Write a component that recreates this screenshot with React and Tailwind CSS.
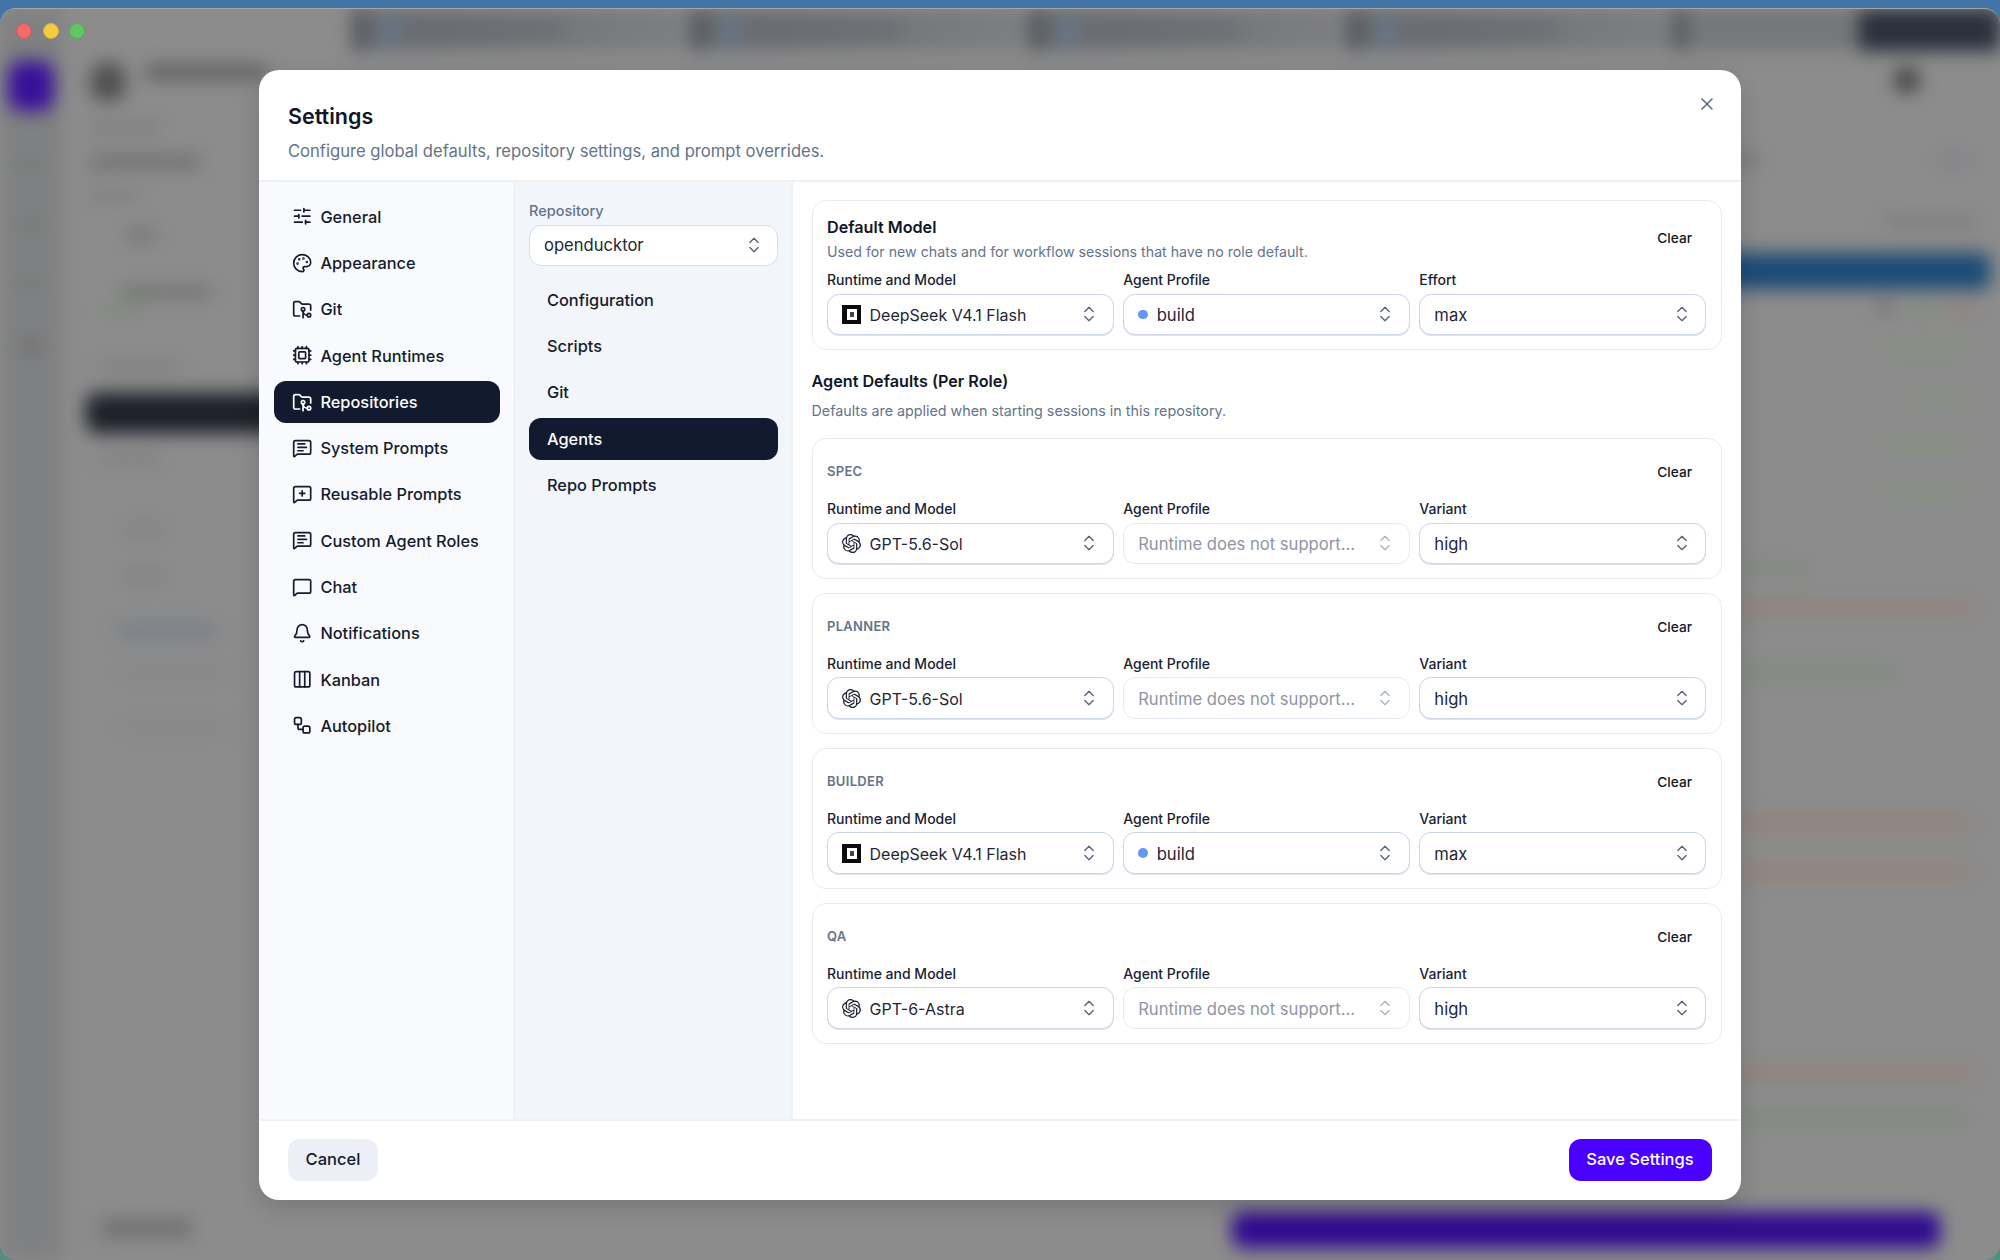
import React from "react";
import { SlidersHorizontal, Palette, FolderGit2, Cpu, MessageSquareText, MessageSquarePlus, MessageSquare, Bell, Columns3, Workflow, ChevronsUpDown, X } from "lucide-react";

const FONT = "font-['Inter','Liberation_Sans',sans-serif]";

function OpenAIIcon() {
  return (
    <svg viewBox="0 0 24 24" className="h-[19px] w-[19px] shrink-0" fill="#1a2030">
      <path d="M22.28 9.82a5.98 5.98 0 0 0-.52-4.91 6.05 6.05 0 0 0-6.51-2.9A6.07 6.07 0 0 0 4.98 4.18a5.98 5.98 0 0 0-4 2.9 6.05 6.05 0 0 0 .75 7.1 5.98 5.98 0 0 0 .51 4.91 6.05 6.05 0 0 0 6.52 2.9A5.98 5.98 0 0 0 13.26 24a6.06 6.06 0 0 0 5.77-4.21 5.99 5.99 0 0 0 4-2.9 6.06 6.06 0 0 0-.75-7.07zM13.26 22.43a4.48 4.48 0 0 1-2.88-1.04l.14-.08 4.78-2.76a.79.79 0 0 0 .39-.68v-6.74l2.02 1.17a.07.07 0 0 1 .04.05v5.58a4.5 4.5 0 0 1-4.49 4.5zM3.6 18.3a4.47 4.47 0 0 1-.53-3.01l.14.08 4.78 2.76a.78.78 0 0 0 .78 0l5.84-3.37v2.33a.08.08 0 0 1-.03.06l-4.84 2.79a4.5 4.5 0 0 1-6.14-1.64zM2.34 7.9a4.49 4.49 0 0 1 2.37-1.97v5.68a.77.77 0 0 0 .39.68l5.81 3.35-2.02 1.17a.08.08 0 0 1-.07 0l-4.83-2.79A4.5 4.5 0 0 1 2.34 7.87zm16.6 3.86-5.84-3.39 2.02-1.16a.08.08 0 0 1 .07 0l4.83 2.79a4.49 4.49 0 0 1-.68 8.1v-5.68a.79.79 0 0 0-.4-.66zm2.01-3.02-.14-.09-4.77-2.78a.78.78 0 0 0-.79 0L9.41 9.23V6.9a.07.07 0 0 1 .03-.06l4.83-2.79a4.5 4.5 0 0 1 6.68 4.66zM8.31 12.86l-2.02-1.16a.08.08 0 0 1-.04-.06V6.07a4.5 4.5 0 0 1 7.38-3.45l-.14.08-4.78 2.76a.79.79 0 0 0-.39.68zm1.1-2.37 2.6-1.5 2.61 1.5v3l-2.6 1.5-2.61-1.5z" />
    </svg>
  );
}

function DeepSeekIcon() {
  return (
    <span className="flex h-[19px] w-[19px] shrink-0 items-center justify-center bg-[#0b0b0b]">
      <span className="flex h-[11px] w-[10px] items-center justify-center bg-white">
        <span className="h-[5px] w-[4px] bg-[#444]" />
      </span>
    </span>
  );
}

function Select({ value, icon, dot, disabled }) {
  const size = icon ? "text-[16px]" : "text-[16.6px]";
  return (
    <div className={`flex h-[41.5px] w-full shrink-0 items-center rounded-[12px] border bg-white pl-[14px] pr-[13.5px] ${size} ${disabled ? "border-[#e6ebf3] text-[#8e96a3]" : "border-[#cbd5e6] text-[#1f2736] shadow-[0_1px_0_#dde3ee]"}`}>
      {icon === "deepseek" && <span className="mr-[8.5px] flex"><DeepSeekIcon /></span>}
      {icon === "openai" && <span className="mr-[8.5px] flex"><OpenAIIcon /></span>}
      {dot && <span className="mr-[9px] h-[9.5px] w-[9.5px] rounded-full bg-[#6496f5]" />}
      <span className="min-w-0 flex-1 truncate pt-[2px]">{value}</span>
      <ChevronsUpDown size={20} strokeWidth={1.6} className={disabled ? "text-[#a9b3c4]" : "text-[#556179]"} />
    </div>
  );
}

function Field({ label, children }) {
  return (
    <div className="flex min-w-0 flex-1 flex-col">
      <div className="mb-[4.5px] h-[19px] text-[14px] leading-[19px] font-medium text-[#1b2233]">{label}</div>
      {children}
    </div>
  );
}

function RoleCard({ role, model, icon, profile, variant }) {
  return (
    <div className="h-[140.6px] rounded-[14px] border border-[#e6ebf3] bg-white px-[14.5px] pt-[14px]">
      <div className="flex h-[38px] items-center justify-between">
        <span className="text-[13px] font-semibold tracking-[0.3px] text-[#64748b]">{role}</span>
        <span className="pr-[14px] text-[13.7px] font-medium text-[#111827]">Clear</span>
      </div>
      <div className="mt-[8px] flex gap-[9.5px]">
        <Field label="Runtime and Model"><Select value={model} icon={icon} /></Field>
        <Field label="Agent Profile">
          {profile ? <Select value={profile} dot /> : <Select value="Runtime does not support..." disabled />}
        </Field>
        <Field label="Variant"><Select value={variant} /></Field>
      </div>
    </div>
  );
}

const NAV = [
  ["General", SlidersHorizontal],
  ["Appearance", Palette],
  ["Git", FolderGit2],
  ["Agent Runtimes", Cpu],
  ["Repositories", FolderGit2],
  ["System Prompts", MessageSquareText],
  ["Reusable Prompts", MessageSquarePlus],
  ["Custom Agent Roles", MessageSquareText],
  ["Chat", MessageSquare],
  ["Notifications", Bell],
  ["Kanban", Columns3],
  ["Autopilot", Workflow],
];

const SUB = ["Configuration", "Scripts", "Git", "Agents", "Repo Prompts"];

function Tab({ w }) {
  return (
    <div className={`flex h-full ${w} items-center border-l-[12px] border-[#50535a] bg-gradient-to-r from-[#686b70] to-[#7e7f81] pl-[18px]`}>
      <div className="h-[26px] w-[16px] bg-[#65798c]" />
      <div className="ml-[14px] h-[10px] w-[150px] bg-[#666870]" />
    </div>
  );
}

function Row({ color, mt, mr = "mr-[7px]", w = "w-[700px]" }) {
  return <div className={`h-[12px] shrink-0 ${mt} ${mr} ${w} ${color}`} />;
}

function Backdrop() {
  return (
    <div className="h-[1252px] w-full overflow-hidden rounded-[16px] border-t border-[#a5a5a5] bg-[#8c8c8c]">
      <div className="flex h-full w-full blur-[9px]">
        <div className="flex w-[62px] shrink-0 flex-col items-center gap-[46px] bg-[#7f8081] pt-[52px]">
          <div className="h-[50px] w-[46px] rounded-[14px] bg-[#38109a]" />
          <div className="h-[14px] w-[14px] rounded-full bg-[#757575]" />
          <div className="h-[14px] w-[14px] rounded-full bg-[#757575]" />
          <div className="h-[14px] w-[14px] rounded-full bg-[#757575]" />
          <div className="h-[18px] w-[18px] rounded-full bg-[#6e6e6e]" />
        </div>
        <div className="flex w-[290px] shrink-0 flex-col pl-[28px] pt-[53px] [&>*]:shrink-0">
          <div className="flex items-start gap-[20px]">
            <div className="h-[40px] w-[36px] rounded-full bg-[#505050]" />
            <div className="mt-[3px] h-[14px] w-[120px] bg-[#5e5e5e]" />
          </div>
          <div className="mt-[22px] h-[8px] w-[70px] bg-[#7a7a7a]" />
          <div className="mt-[24px] h-[12px] w-[110px] bg-[#6e6e6e]" />
          <div className="mt-[23px] h-[8px] w-[46px] bg-[#7a7a7a]" />
          <div className="ml-[36px] mt-[31px] h-[10px] w-[30px] bg-[#707070]" />
          <div className="ml-[32px] mt-[46px] h-[12px] w-[90px] bg-[#707470]" />
          <div className="ml-[12px] mt-[8px] h-[8px] w-[40px] bg-[#7a8a7a]" />
          <div className="ml-[10px] mt-[49px] h-[8px] w-[80px] bg-[#7c7c7c]" />
          <div className="-ml-[4px] mt-[22px] h-[40px] w-[260px] rounded-[10px] bg-[#1d2029]" />
          <div className="ml-[10px] mt-[22px] h-[8px] w-[60px] bg-[#7d7d7d]" />
          <div className="ml-[36px] mt-[62px] h-[8px] w-[36px] bg-[#7d7d7d]" />
          <div className="ml-[36px] mt-[39px] h-[8px] w-[36px] bg-[#7d7d7d]" />
          <div className="ml-[26px] mt-[42px] h-[18px] w-[100px] rounded-[6px] bg-[#7b8087]" />
          <div className="ml-[26px] mt-[30px] h-[6px] w-[110px] bg-[#838383]" />
          <div className="ml-[26px] mt-[48px] h-[6px] w-[110px] bg-[#838383]" />
          <div className="ml-[12px] mt-[490px] h-[16px] w-[90px] bg-[#6e6e6e]" />
        </div>
        <div className="flex min-w-0 flex-1 flex-col">
          <div className="flex h-[42px] shrink-0">
            <Tab w="w-[340px]" />
            <Tab w="w-[338px]" />
            <Tab w="w-[318px]" />
            <Tab w="w-[326px]" />
            <div className="h-full w-[185px] border-l-[12px] border-[#50535a] bg-[#75777a]" />
            <div className="h-full flex-1 bg-[#2a303c]" />
          </div>
          <div className="flex flex-1 flex-col items-end overflow-visible pr-[20px]">
            <div className="mt-[16px] mr-[60px] h-[26px] w-[26px] shrink-0 rounded-full bg-[#444]" />
            <div className="mt-[62px] mr-[10px] flex h-[10px] w-[250px] shrink-0 justify-between">
              <div className="h-full w-[40px] bg-[#777]" />
              <div className="h-full w-[30px] bg-[#7d8088]" />
            </div>
            <div className="mt-[52px] mr-[5px] h-[10px] w-[90px] shrink-0 bg-[#7a7a7a]" />
            <div className="mt-[26px] -mr-[10px] h-[36px] w-full shrink-0 rounded-[8px] bg-[#1b4a76]" />
            <div className="mt-[12px] mr-[5px] flex h-[12px] w-[100px] shrink-0 justify-between">
              <div className="h-full w-[20px] bg-[#777]" />
              <div className="h-full w-[25px] bg-[#7f8f7f]" />
              <div className="h-full w-[25px] bg-[#928078]" />
            </div>
            <Row color="bg-[#85917f]" mt="mt-[28px]" w="w-[90px]" />
            <Row color="bg-[#85917f]" mt="mt-[40px]" w="w-[60px]" />
            <Row color="bg-[#85917f]" mt="mt-[34px]" w="w-[90px]" />
            <Row color="bg-[#85917f]" mt="mt-[37px]" w="w-[90px]" />
            <Row color="bg-[#808a80]" mt="mt-[62px]" mr="mr-[167px]" w="w-[600px]" />
            <Row color="bg-[#928078]" mt="mt-[28px]" />
            <Row color="bg-[#808a80]" mt="mt-[52px]" mr="mr-[80px]" />
            <Row color="bg-[#928078]" mt="mt-[139px]" />
            <Row color="bg-[#928078]" mt="mt-[37px]" />
            <Row color="bg-[#928078]" mt="mt-[189px]" />
            <Row color="bg-[#808a80]" mt="mt-[32px]" />
          </div>
          <div className="flex h-[60px] shrink-0 items-center pl-[880px] pr-[60px]">
            <div className="h-[36px] w-full rounded-[10px] bg-[#2e0a8f]" />
          </div>
        </div>
      </div>
    </div>
  );
}

export default function App() {
  return (
    <div className={`relative h-[1260px] w-[2000px] overflow-hidden bg-gradient-to-b from-[#4274a8] from-50% to-[#4f9080] pt-[8px] ${FONT}`}>
      <Backdrop />
      <div className="absolute left-[16px] top-[23px] flex gap-[10.5px]">
        <span className="h-[16px] w-[16px] rounded-full border border-[#d85555] bg-[#f26b6b]" />
        <span className="h-[16px] w-[16px] rounded-full border border-[#d8b23c] bg-[#f6cb42]" />
        <span className="h-[16px] w-[16px] rounded-full border border-[#55ae55] bg-[#62c664]" />
      </div>

      <div className="absolute left-[259px] top-[70px] flex h-[1129.5px] w-[1481.5px] flex-col overflow-hidden rounded-[20px] bg-white text-[#111827] shadow-[0_8px_24px_rgba(0,0,0,0.15)]">
        <div className="relative h-[112px] shrink-0 border-b-2 border-[#eef1f6] pl-[29px] pt-[32px]">
          <div className="text-[21.5px] font-semibold leading-[28px] text-[#0f172a]">Settings</div>
          <div className="mt-[9px] text-[16.6px] leading-[24px] text-[#64748b]">Configure global defaults, repository settings, and prompt overrides.</div>
          <span className="absolute right-[24px] top-[24px] text-[#53607a]"><X size={20} strokeWidth={1.7} /></span>
        </div>

        <div className="flex min-h-0 flex-1">
          <div className="flex w-[256px] shrink-0 flex-col gap-[4px] border-r border-[#e6eaf1] bg-[#f9fafd] pl-[15px] pr-[14px] pt-[13.5px]">
            {NAV.map(([name, Icon]) => {
              const active = name === "Repositories";
              return (
                <div key={name} className={`flex h-[42.27px] items-center gap-[8px] rounded-[12px] pl-[18px] text-[16.35px] font-medium ${active ? "bg-[#111a2e] text-white" : "text-[#151c2e]"}`}>
                  <Icon size={20.4} strokeWidth={2} className="shrink-0" />
                  <span className="pt-[1px]">{name}</span>
                </div>
              );
            })}
          </div>

          <div className="flex w-[278px] shrink-0 flex-col border-r-2 border-[#eef1f6] bg-[#f2f5fa] pl-[14px] pr-[13px] pt-[19.5px]">
            <div className="text-[14.5px] leading-[18px] font-medium text-[#64748b]">Repository</div>
            <div className="mt-[5px] flex h-[41.5px] items-center justify-between rounded-[12px] border border-[#d5dcea] bg-white pl-[14px] pr-[13.5px] text-[16.6px] text-[#1f2736]">
              <span className="pt-[0.5px]">openducktor</span>
              <ChevronsUpDown size={20} strokeWidth={1.6} className="text-[#556179]" />
            </div>
            <div className="mt-[13px] flex flex-col gap-[4px]">
              {SUB.map((name) => (
                <div key={name} className={`flex h-[42.27px] items-center rounded-[12px] pl-[18px] text-[16.35px] font-medium ${name === "Agents" ? "bg-[#111a2e] text-white" : "text-[#151c2e]"}`}>
                  <span>{name}</span>
                </div>
              ))}
            </div>
          </div>

          <div className="flex min-w-0 flex-1 flex-col pl-[18.5px] pr-[19px] pt-[18px]">
            <div className="h-[150px] shrink-0 rounded-[14px] border border-[#e6ebf3] bg-white px-[14.5px] pt-[14px]">
              <div className="flex items-center justify-between">
                <div>
                  <div className="text-[16.2px] leading-[24px] font-semibold text-[#111827]">Default Model</div>
                  <div className="mt-[3px] text-[14.2px] leading-[20px] text-[#64748b]">Used for new chats and for workflow sessions that have no role default.</div>
                </div>
                <span className="pr-[14px] text-[13.7px] font-medium text-[#111827]">Clear</span>
              </div>
              <div className="mt-[8px] flex gap-[9.5px]">
                <Field label="Runtime and Model"><Select value="DeepSeek V4.1 Flash" icon="deepseek" /></Field>
                <Field label="Agent Profile"><Select value="build" dot /></Field>
                <Field label="Effort"><Select value="max" /></Field>
              </div>
            </div>
            <div className="mt-[19px] text-[16.2px] leading-[24px] font-semibold text-[#111827]">Agent Defaults (Per Role)</div>
            <div className="mt-[8px] text-[14.3px] leading-[20px] text-[#64748b]">Defaults are applied when starting sessions in this repository.</div>
            <div className="mt-[17px] flex flex-col gap-[14.4px]">
              <RoleCard role="SPEC" model="GPT-5.6-Sol" icon="openai" variant="high" />
              <RoleCard role="PLANNER" model="GPT-5.6-Sol" icon="openai" variant="high" />
              <RoleCard role="BUILDER" model="DeepSeek V4.1 Flash" icon="deepseek" profile="build" variant="max" />
              <RoleCard role="QA" model="GPT-6-Astra" icon="openai" variant="high" />
            </div>
          </div>
        </div>

        <div className="flex h-[81px] shrink-0 items-center justify-between border-t-2 border-[#eef1f6] pb-[1px] pl-[29px] pr-[29px]">
          <button className="flex h-[42px] w-[90px] items-center justify-center rounded-[12px] bg-[#eceff5] text-[16.5px] font-medium text-[#111a2e]">Cancel</button>
          <button className="flex h-[42px] w-[143px] items-center justify-center rounded-[12px] bg-[#4a00ff] text-[16.5px] font-medium text-white">Save Settings</button>
        </div>
      </div>
    </div>
  );
}
